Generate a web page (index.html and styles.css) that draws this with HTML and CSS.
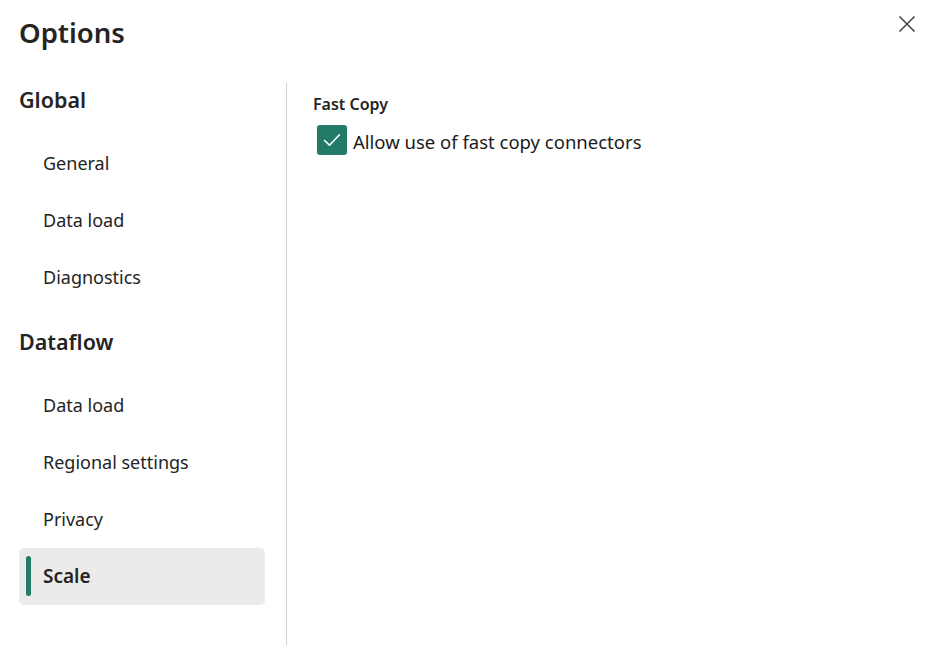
FILE: index.html
```html
<!DOCTYPE html>
<html>
<head>
<meta charset="utf-8">
<link rel="stylesheet" href="styles.css">
</head>
<body>
<div class="dialog">
  <header class="head">
    <h1 class="title">Options</h1>
    <button class="close" aria-label="Close">
      <svg width="18" height="18" viewBox="0 0 18 18"><path d="M1.5 1.5 L16.5 16.5 M16.5 1.5 L1.5 16.5" stroke="#424242" stroke-width="1.5" fill="none"/></svg>
    </button>
  </header>
  <div class="body">
    <nav class="nav">
      <div class="group">Global</div>
      <div class="item">General</div>
      <div class="item">Data load</div>
      <div class="item">Diagnostics</div>
      <div class="group">Dataflow</div>
      <div class="item">Data load</div>
      <div class="item">Regional settings</div>
      <div class="item">Privacy</div>
      <div class="item selected"><span class="bar"></span>Scale</div>
    </nav>
    <main class="content">
      <div class="section">Fast Copy</div>
      <label class="check">
        <span class="box"><svg width="20" height="20" viewBox="0 0 20 20"><path d="M2.5 10.5 L7.5 15.2 L17.5 4.8" stroke="#fff" stroke-width="1.6" fill="none" stroke-linecap="round" stroke-linejoin="round"/></svg></span>
        <span class="label">Allow use of fast copy connectors</span>
      </label>
    </main>
  </div>
</div>
</body>
</html>
```
FILE: styles.css
```css
html, body {
  margin: 0;
  padding: 0;
  background: #fff;
}
body {
  font-family: "Noto Sans", "Open Sans", sans-serif;
  color: #242424;
  width: 937px;
  height: 645px;
  overflow: hidden;
}
.dialog {
  display: flex;
  flex-direction: column;
  height: 645px;
}
.head {
  display: flex;
  justify-content: space-between;
  align-items: flex-start;
  padding: 0 19px 0 19px;
  height: 83px;
}
.title {
  margin: 13px 0 0 0;
  font-size: 27.5px;
  font-weight: 600;
  line-height: 40px;
}
.close {
  border: none;
  background: none;
  padding: 0;
  margin: 15px 2px 0 0;
  width: 18px;
  height: 18px;
  display: flex;
}
.body {
  display: flex;
  flex: 1;
}
.nav {
  width: 246px;
  padding: 0 21px 0 19px;
  border-right: 1px solid #d1d1d1;
  display: flex;
  flex-direction: column;
}
.group {
  font-size: 21.5px;
  font-weight: 600;
  height: 36px;
  line-height: 34px;
  margin-bottom: 16px;
}
.item + .group {
  margin-top: 19px;
}
.item {
  position: relative;
  height: 57px;
  line-height: 57px;
  padding-left: 24px;
  font-size: 18px;
  border-radius: 5px;
}
.item.selected {
  background: #edebe9;
  font-weight: 600;
  font-size: 19px;
}
.bar {
  position: absolute;
  left: 7px;
  top: 8px;
  width: 5px;
  height: 40px;
  border-radius: 3px;
  background: #237a66;
}
.content {
  padding: 10px 26px;
}
.section {
  font-size: 16px;
  font-weight: 600;
  line-height: 22px;
}
.check {
  display: flex;
  align-items: center;
  gap: 6px;
  margin-top: 10px;
  margin-left: 4px;
}
.box {
  width: 30px;
  height: 30px;
  border-radius: 3px;
  background: #237a66;
  display: flex;
  align-items: center;
  justify-content: center;
}
.label {
  font-size: 18.5px;
  color: #1b1b1b;
  position: relative;
  top: 1px;
}
```
